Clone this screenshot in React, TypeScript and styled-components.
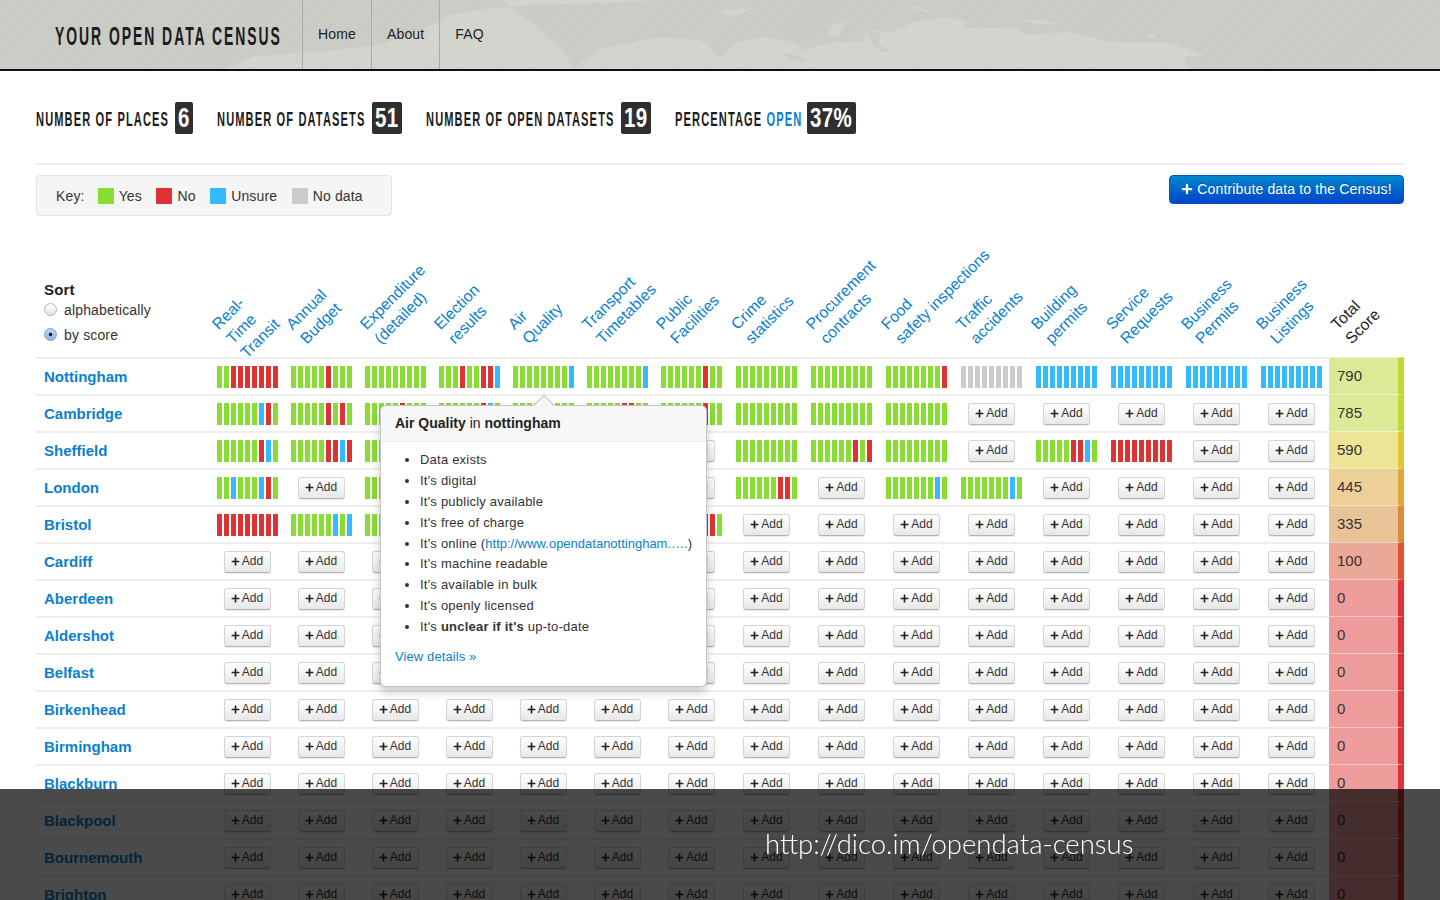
import styled, { createGlobalStyle } from "styled-components";
import { FaPlus } from "react-icons/fa";

const BLUE = "#0a7fd0";

const Y9 = "YYYYYYYYY";
const U9 = "UUUUUUUUU";
const ROWS = [
  { name: "Nottingham", score: 790, tone: 0, cells: ["YYNNNNNNN", "YYYYYNYYY", Y9, "YYYNYYNNU", "YYYYYYYYU", "YYYYYYYYU", "YYYYYYNYY", Y9, Y9, "YYYYYYYYN", "GGGGGGGGG", U9, U9, U9, U9] },
  { name: "Cambridge", score: 785, tone: 0, cells: ["YYYYYYUNY", "YYYYYNYNY", "YYYYYNYYY", "YYYYYYNUY", Y9, "YYYYYNNYY", "YYYYYYNYY", Y9, Y9, Y9, "", "", "", "", ""] },
  { name: "Sheffield", score: 590, tone: 1, cells: ["YYYYYYNUY", "YYYYYNNUN", Y9, "", "", "", "", Y9, "YYYYYYNYN", Y9, "", "YYYYYNNUY", "NNNNNNNNN", "", ""] },
  { name: "London", score: 445, tone: 2, cells: ["YYUYYYUNY", "", Y9, "", "", "", "", "YYYYYYNNY", "", "YYYYYYYUY", "YYYYYYYUY", "", "", "", ""] },
  { name: "Bristol", score: 335, tone: 3, cells: ["NNNNNNNNN", "YYYYYYUYU", Y9, "", "", "", "YYYYYYNNY", "", "", "", "", "", "", "", ""] },
  { name: "Cardiff", score: 100, tone: 4 },
  { name: "Aberdeen", score: 0, tone: 5 },
  { name: "Aldershot", score: 0, tone: 5 },
  { name: "Belfast", score: 0, tone: 5 },
  { name: "Birkenhead", score: 0, tone: 5 },
  { name: "Birmingham", score: 0, tone: 5 },
  { name: "Blackburn", score: 0, tone: 5 },
  { name: "Blackpool", score: 0, tone: 5 },
  { name: "Bournemouth", score: 0, tone: 5 },
  { name: "Brighton", score: 0, tone: 5 },
];

const COLUMNS = [
  ["Real-", "Time", "Transit"],
  ["Annual", "Budget"],
  ["Expenditure", "(detailed)"],
  ["Election", "results"],
  ["Air", "Quality"],
  ["Transport", "Timetables"],
  ["Public", "Facilities"],
  ["Crime", "statistics"],
  ["Procurement", "contracts"],
  ["Food", "safety inspections"],
  ["Traffic", "accidents"],
  ["Building", "permits"],
  ["Service", "Requests"],
  ["Business", "Permits"],
  ["Business", "Listings"],
];

const STATS = [
  { parts: ["NUMBER OF PLACES"], width: 133, value: "6", box: 18 },
  { parts: ["NUMBER OF DATASETS"], width: 149, value: "51", box: 30 },
  { parts: ["NUMBER OF OPEN DATASETS"], width: 189, value: "19", box: 30 },
  { parts: ["PERCENTAGE ", "OPEN"], width: 126, value: "37%", box: 49 },
];

const TONES = [
  ["#dcea98", "#c0d932"],
  ["#ece598", "#e0c832"],
  ["#ecd098", "#e0a838"],
  ["#eac499", "#dc8b38"],
  ["#eaa898", "#dc5533"],
  ["#ee9c9c", "#dd3333"],
];

const BAR_COLORS: Record<string, string> = {
  Y: "#88dd33",
  N: "#dd3333",
  U: "#33bbff",
  G: "#cccccc",
};

const GlobalStyle = createGlobalStyle`
  html, body {
    margin: 0;
    height: 100%;
    overflow: hidden;
    background: #fff;
  }
  body {
    font-family: "Liberation Sans", Arial, sans-serif;
    font-size: 14px;
    letter-spacing: 0.15px;
    color: #333;
  }
`;

const Header = styled.header`
  position: relative;
  height: 69px;
  border-bottom: 2px solid #111;
  display: flex;
  overflow: hidden;
  background-color: #cbcdc6;
`;
const MapArt = styled.svg`
  position: absolute;
  inset: 0;
  width: 100%;
  height: 100%;
`;
const Stripes = styled.div`
  position: absolute;
  inset: 0;
  background: repeating-linear-gradient(
    135deg,
    rgba(255, 255, 255, 0.04) 0 1px,
    rgba(0, 0, 0, 0.015) 1px 3px
  );
`;
const Brand = styled.div`
  position: relative;
  width: 247px;
  padding-left: 55px;
  line-height: 72px;
  color: #1c1c1c;
`;
const Narrow = styled.span<{ $scale: number }>`
  display: inline-block;
  white-space: nowrap;
  font-family: "Liberation Sans", sans-serif;
  font-weight: 700;
  transform: scaleX(${(p) => p.$scale});
  transform-origin: left center;
`;
const BrandText = styled(Narrow)`
  font-size: 25px;
  letter-spacing: 3.5px;
`;
const Nav = styled.nav`
  position: relative;
  display: flex;
`;
const NavItem = styled.a`
  padding: 0 15px;
  border-left: 1px solid #a9aba5;
  line-height: 69px;
  font-size: 14px;
  color: #222;
`;

const Page = styled.main`
  padding: 0 36px;
`;
const Stats = styled.section`
  display: flex;
  gap: 24px;
  margin-top: 31px;
  padding-bottom: 29px;
  border-bottom: 2px solid #eee;
`;
const Stat = styled.div`
  display: flex;
  align-items: center;
  gap: 6px;
`;
const StatLabel = styled.div<{ $w: number }>`
  width: ${(p) => p.$w}px;
  padding-top: 2px;
  color: #1c1c1c;
`;
const StatText = styled(Narrow)`
  font-size: 20px;
  letter-spacing: 2px;
`;
const Accent = styled.span`
  color: ${BLUE};
`;
const StatBox = styled.div<{ $w: number }>`
  width: ${(p) => p.$w}px;
  height: 32px;
  display: flex;
  align-items: center;
  justify-content: flex-start;
  overflow: hidden;
  padding-left: 3px;
  box-sizing: border-box;
  background: #2f2f2f;
  border-radius: 2px;
  color: #fff;
`;
const StatValue = styled(Narrow)`
  font-size: 27px;
  letter-spacing: 0.4px;
`;

const Toolbar = styled.section`
  display: flex;
  justify-content: space-between;
  align-items: flex-start;
  margin-top: 10px;
`;
const KeyBox = styled.div`
  width: 356px;
  height: 41px;
  box-sizing: border-box;
  display: flex;
  align-items: center;
  padding-left: 19px;
  background: #f5f5f5;
  border: 1px solid #e3e3e3;
  border-radius: 4px;
`;
const KeyTitle = styled.span`
  margin-right: 13px;
`;
const KeyItem = styled.span`
  display: flex;
  align-items: center;
  gap: 5px;
  margin-right: 14.5px;
`;
const Swatch = styled.i<{ $color: string }>`
  width: 16px;
  height: 16px;
  background: ${(p) => p.$color};
`;
const Contribute = styled.button`
  width: 235px;
  height: 29px;
  padding: 0 0 2px;
  display: flex;
  align-items: center;
  justify-content: center;
  gap: 4px;
  border: 1px solid #0a55b8;
  border-radius: 4px;
  background: linear-gradient(#0088cc, #0044cc);
  color: #fff;
  font-family: inherit;
  font-size: 14px;
  letter-spacing: 0.15px;
  text-shadow: 0 -1px 0 rgba(0, 0, 0, 0.25);
`;

const Table = styled.section`
  position: relative;
`;
const HeadRow = styled.div`
  display: grid;
  grid-template-columns: 174px repeat(6, 74px) repeat(9, 75px) 75px;
  height: 141px;
`;
const SortCell = styled.div`
  display: flex;
  flex-direction: column;
  justify-content: flex-end;
  padding: 0 0 10px 8px;
`;
const SortTitle = styled.div`
  font-size: 15px;
  font-weight: 700;
  color: #222;
  line-height: 14px;
`;
const RadioRow = styled.label`
  display: flex;
  align-items: center;
  gap: 7px;
  height: 25px;
`;
const Radio = styled.span<{ $on?: boolean }>`
  width: 13px;
  height: 13px;
  box-sizing: border-box;
  border-radius: 50%;
  border: 1px solid ${(p) => (p.$on ? "#7d9ec4" : "#b5b5b5")};
  background: ${(p) =>
    p.$on
      ? "radial-gradient(circle, #222 0 1.6px, transparent 2.2px), linear-gradient(#bcd4f0, #8fb8e8)"
      : "linear-gradient(#ffffff, #e2e2e2)"};
`;
const HeadCell = styled.div`
  position: relative;
`;
const RotatedLabel = styled.div<{ $dark?: boolean }>`
  position: absolute;
  left: -2px;
  top: 104px;
  transform: rotate(-45deg);
  transform-origin: 0 0;
  font-size: 15.8px;
  line-height: 20px;
  letter-spacing: 0;
  white-space: nowrap;
  color: ${(p) => (p.$dark ? "#222" : BLUE)};
`;
const Line = styled.div``;

const Row = styled.div`
  display: grid;
  grid-template-columns: 174px repeat(6, 74px) repeat(9, 75px) 75px;
  height: 35px;
  border-top: 2px solid #eee;
`;
const Place = styled.a`
  padding-left: 8px;
  font-size: 15px;
  font-weight: 700;
  letter-spacing: 0;
  line-height: 35px;
  color: ${BLUE};
`;
const Cell = styled.div`
  display: flex;
  justify-content: center;
  align-items: flex-start;
  padding-top: 7px;
`;
const Bars = styled.div`
  display: flex;
  gap: 2px;
`;
const Bar = styled.i<{ $color: string }>`
  width: 5px;
  height: 22px;
  background: ${(p) => p.$color};
`;
const AddButton = styled.button`
  width: 47px;
  height: 22px;
  padding: 0 0 2px;
  display: flex;
  align-items: center;
  justify-content: center;
  gap: 2px;
  font-family: inherit;
  font-size: 12px;
  color: #333;
  border: 1px solid #d4d4d4;
  border-bottom-color: #b3b3b3;
  border-radius: 3px;
  background: linear-gradient(#ffffff, #e8e8e8);
  box-shadow: 0 1px 1px rgba(0, 0, 0, 0.08);
  svg {
    width: 9px;
    height: 9px;
    color: #222;
  }
`;
const Score = styled.div<{ $bg: string; $strip: string }>`
  margin-top: -2px;
  height: 37px;
  box-sizing: border-box;
  padding-left: 8px;
  font-size: 15px;
  letter-spacing: 0;
  line-height: 36px;
  color: #333;
  background: ${(p) => p.$bg};
  border-right: 6px solid ${(p) => p.$strip};
  border-top: 1px solid rgba(255, 255, 255, 0.45);
`;

const Popover = styled.aside`
  position: absolute;
  left: 344px;
  top: 189px;
  width: 327px;
  height: 282px;
  box-sizing: border-box;
  background: #fff;
  border: 1px solid #c4c4c4;
  border-radius: 6px;
  box-shadow: 0 5px 10px rgba(0, 0, 0, 0.22);
  font-size: 13px;
  letter-spacing: 0;
`;
const Arrow = styled.span`
  position: absolute;
  left: 155px;
  top: -8px;
  width: 15px;
  height: 15px;
  transform: rotate(45deg);
  background: #f7f7f7;
  border-top: 1px solid #c4c4c4;
  border-left: 1px solid #c4c4c4;
`;
const PopTitle = styled.h3`
  position: relative;
  margin: 0;
  height: 35px;
  padding-left: 14px;
  background: #f7f7f7;
  border-bottom: 1px solid #ebebeb;
  border-radius: 5px 5px 0 0;
  font-size: 14px;
  font-weight: 400;
  line-height: 35px;
  color: #222;
`;
const PopList = styled.ul`
  margin: 7px 0 0;
  padding: 0 0 0 39px;
  letter-spacing: 0.22px;
  color: #333;
`;
const PopItem = styled.li`
  height: 20.9px;
  line-height: 21px;
`;
const PopLink = styled.a`
  letter-spacing: 0;
  color: ${BLUE};
`;
const ViewDetails = styled.a`
  display: block;
  margin: 9px 0 0 14px;
  line-height: 21px;
  letter-spacing: 0.1px;
  color: ${BLUE};
`;

const Banner = styled.div`
  position: fixed;
  left: 0;
  right: 0;
  bottom: 0;
  height: 111px;
  box-sizing: border-box;
  display: flex;
  align-items: center;
  padding: 0 0 2px 765px;
  background: rgba(0, 0, 0, 0.71);
  color: #fff;
  font-family: Lato, "Open Sans", sans-serif;
  font-size: 27.5px;
  font-weight: 300;
  letter-spacing: 0;
`;

const PlaceCell = ({ pattern }: { pattern?: string }) => (
  <Cell>
    {pattern ? (
      <Bars>
        {pattern.split("").map((code, i) => (
          <Bar key={i} $color={BAR_COLORS[code]} />
        ))}
      </Bars>
    ) : (
      <AddButton>
        <FaPlus />
        Add
      </AddButton>
    )}
  </Cell>
);

const App = () => {
  return (
    <>
      <GlobalStyle />
      <Header>
        <MapArt viewBox="0 0 1440 69" preserveAspectRatio="none">
          <g fill="#d3d5ce">
            <path d="M225 69 255 56 320 52 370 46 395 40 420 30 450 15 490 8 530 5 600 3 660 0 500 0 528 20 560 47 574 69Z" />
            <path d="M574 69 597 50 656 37 700 40 720 57 738 42 766 37 798 43 803 50 835 42 862 42 867 30 894 32 913 22 950 17 968 22 961 28 1014 28 1028 35 1069 32 1110 42 1170 43 1204 55 1184 57 1197 69Z" />
            <path d="M828 35 832 25 858 18 845 24 838 35Z" />
            <path d="M720 10 754 8 742 14 730 17Z" />
            <path d="M904 5 920 7 936 13 920 11Z" />
            <path d="M1023 20 1040 20 1057 24 1035 24Z" />
            <path d="M1147 35 1156 35 1156 37 1147 37Z" />
          </g>
          <g fill="#cbcdc6">
            <path d="M867 30 880 34 878 44 890 52 882 52 872 44Z" />
            <path d="M780 52 800 56 807 62 790 60Z" />
            <path d="M1184 57 1200 60 1197 69 1188 66Z" />
          </g>
        </MapArt>
        <Stripes />
        <Brand>
          <BrandText $scale={0.558}>YOUR OPEN DATA CENSUS</BrandText>
        </Brand>
        <Nav>
          <NavItem>Home</NavItem>
          <NavItem>About</NavItem>
          <NavItem>FAQ</NavItem>
        </Nav>
      </Header>
      <Page>
        <Stats>
          {STATS.map((stat) => (
            <Stat key={stat.value}>
              <StatLabel $w={stat.width}>
                <StatText $scale={0.555}>
                  {stat.parts[0]}
                  {stat.parts[1] && <Accent>{stat.parts[1]}</Accent>}
                </StatText>
              </StatLabel>
              <StatBox $w={stat.box}>
                <StatValue $scale={0.76}>{stat.value}</StatValue>
              </StatBox>
            </Stat>
          ))}
        </Stats>
        <Toolbar>
          <KeyBox>
            <KeyTitle>Key:</KeyTitle>
            <KeyItem>
              <Swatch $color={BAR_COLORS.Y} />
              Yes
            </KeyItem>
            <KeyItem>
              <Swatch $color={BAR_COLORS.N} />
              No
            </KeyItem>
            <KeyItem>
              <Swatch $color={BAR_COLORS.U} />
              Unsure
            </KeyItem>
            <KeyItem>
              <Swatch $color={BAR_COLORS.G} />
              No data
            </KeyItem>
          </KeyBox>
          <Contribute>
            <FaPlus size={12} />
            Contribute data to the Census!
          </Contribute>
        </Toolbar>
        <Table>
          <HeadRow>
            <SortCell>
              <SortTitle>Sort</SortTitle>
              <RadioRow>
                <Radio />
                alphabetically
              </RadioRow>
              <RadioRow>
                <Radio $on />
                by score
              </RadioRow>
            </SortCell>
            {COLUMNS.map((lines, i) => (
              <HeadCell key={i}>
                <RotatedLabel>
                  {lines.map((line) => (
                    <Line key={line}>{line}</Line>
                  ))}
                </RotatedLabel>
              </HeadCell>
            ))}
            <HeadCell>
              <RotatedLabel $dark>
                <Line>Total</Line>
                <Line>Score</Line>
              </RotatedLabel>
            </HeadCell>
          </HeadRow>
          {ROWS.map((row) => (
            <Row key={row.name}>
              <Place>{row.name}</Place>
              {COLUMNS.map((_, i) => (
                <PlaceCell key={i} pattern={row.cells?.[i]} />
              ))}
              <Score $bg={TONES[row.tone][0]} $strip={TONES[row.tone][1]}>
                {row.score}
              </Score>
            </Row>
          ))}
          <Popover>
            <Arrow />
            <PopTitle>
              <b>Air Quality</b> in <b>nottingham</b>
            </PopTitle>
            <PopList>
              <PopItem>Data exists</PopItem>
              <PopItem>It's digital</PopItem>
              <PopItem>It's publicly available</PopItem>
              <PopItem>It's free of charge</PopItem>
              <PopItem>
                It's online (<PopLink>http://www.opendatanottingham.….</PopLink>)
              </PopItem>
              <PopItem>It's machine readable</PopItem>
              <PopItem>It's available in bulk</PopItem>
              <PopItem>It's openly licensed</PopItem>
              <PopItem>
                It's <b>unclear if it's</b> up-to-date
              </PopItem>
            </PopList>
            <ViewDetails>View details »</ViewDetails>
          </Popover>
        </Table>
      </Page>
      <Banner>http://dico.im/opendata-census</Banner>
    </>
  );
};

export default App;
